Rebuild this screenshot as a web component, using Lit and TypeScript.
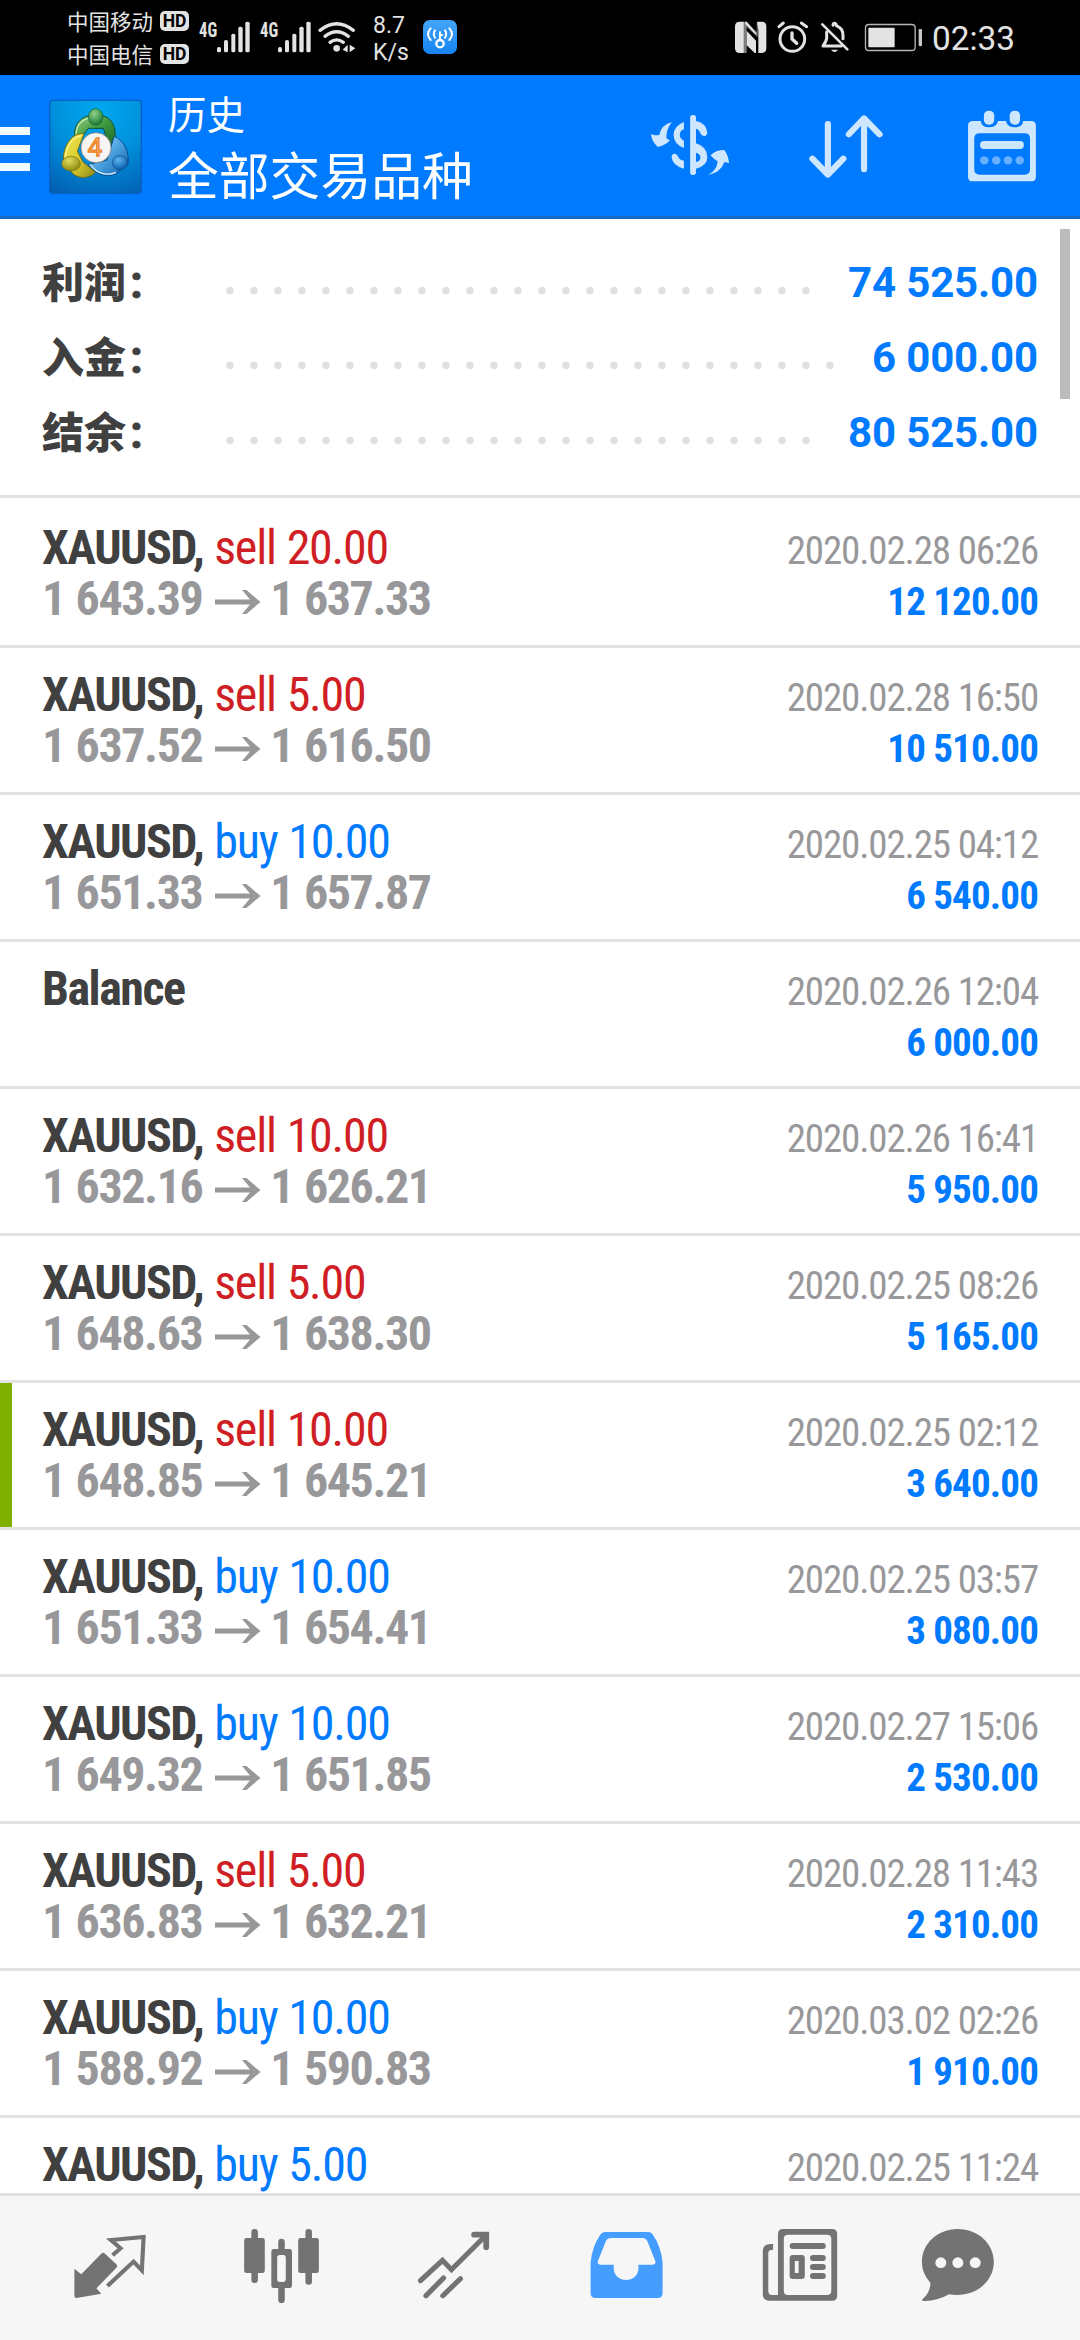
import { LitElement, html, css, svg, nothing } from "lit";
import { customElement, property } from "lit/decorators.js";

interface Deal {
  side?: "buy" | "sell";
  volume?: string;
  open?: string;
  close?: string;
  time: string;
  profit?: string;
  marked?: boolean;
}

const DEALS: Deal[] = [
  { side: "sell", volume: "20.00", open: "1 643.39", close: "1 637.33", time: "2020.02.28 06:26", profit: "12 120.00" },
  { side: "sell", volume: "5.00", open: "1 637.52", close: "1 616.50", time: "2020.02.28 16:50", profit: "10 510.00" },
  { side: "buy", volume: "10.00", open: "1 651.33", close: "1 657.87", time: "2020.02.25 04:12", profit: "6 540.00" },
  { time: "2020.02.26 12:04", profit: "6 000.00" },
  { side: "sell", volume: "10.00", open: "1 632.16", close: "1 626.21", time: "2020.02.26 16:41", profit: "5 950.00" },
  { side: "sell", volume: "5.00", open: "1 648.63", close: "1 638.30", time: "2020.02.25 08:26", profit: "5 165.00" },
  { side: "sell", volume: "10.00", open: "1 648.85", close: "1 645.21", time: "2020.02.25 02:12", profit: "3 640.00", marked: true },
  { side: "buy", volume: "10.00", open: "1 651.33", close: "1 654.41", time: "2020.02.25 03:57", profit: "3 080.00" },
  { side: "buy", volume: "10.00", open: "1 649.32", close: "1 651.85", time: "2020.02.27 15:06", profit: "2 530.00" },
  { side: "sell", volume: "5.00", open: "1 636.83", close: "1 632.21", time: "2020.02.28 11:43", profit: "2 310.00" },
  { side: "buy", volume: "10.00", open: "1 588.92", close: "1 590.83", time: "2020.03.02 02:26", profit: "1 910.00" },
  { side: "buy", volume: "5.00", time: "2020.02.25 11:24" },
];

const SUMMARY = [
  { label: "利润", value: "74 525.00" },
  { label: "入金", value: "6 000.00" },
  { label: "结余", value: "80 525.00" },
];

const signalBars = svg`
  <g fill="#e3e3e3">
    <rect x="107" y="141" width="12" height="16" rx="5"/>
    <rect x="128" y="120" width="12" height="37" rx="5"/>
    <rect x="150" y="101" width="12" height="56" rx="5"/>
    <rect x="171" y="80" width="13" height="77" rx="5"/>
    <rect x="192" y="65" width="13" height="92" rx="5"/>
  </g>`;

@customElement("status-bar")
export class StatusBar extends LitElement {
  static styles = css`
    :host { display: flex; height: 75px; background: #000; color: #e3e3e3; font-family: Roboto, "Noto Sans CJK SC", sans-serif; }
    svg { display: block; flex: none; }
    .carriers { display: flex; flex-direction: column; padding: 4px 0 0 67px; width: 122px; }
    .carrier { display: flex; align-items: center; justify-content: space-between; height: 33px; font-size: 21.5px; white-space: nowrap; font-family: "Noto Sans CJK SC", sans-serif; }
    .hd { width: 29px; height: 20px; border-radius: 5px; background: #e3e3e3; color: #000; font: 700 17.5px/20px Roboto, sans-serif; text-align: center; }
    .net { font: 700 20px/20px "Roboto Condensed", Roboto, sans-serif; width: 17px; padding-top: 19.5px; margin-left: 10px; }
    .net + svg + .net { margin-left: 9px; }
    .net span { display: inline-block; transform: scaleX(.83); transform-origin: left; }
    .speed { padding-top: 11.5px; margin-left: 13px; width: 50px; font-size: 23px; line-height: 27px; }
    .grow { flex: 1; }
    .clock { font-size: 34px; line-height: 40px; padding: 18px 0 0 2px; width: 148px; white-space: nowrap; }
    .clock span { display: inline-block; transform: scaleX(.98); transform-origin: left; }
  `;
  render() {
    return html`
      <div class="carriers">
        <div class="carrier"><span>中国移动</span><span class="hd">HD</span></div>
        <div class="carrier"><span>中国电信</span><span class="hd">HD</span></div>
      </div>
      <div class="net"><span>4G</span></div>
      <svg width="35" height="75" viewBox="104 0 105 225">${signalBars}</svg>
      <div class="net"><span>4G</span></div>
      <svg width="35" height="75" viewBox="104 0 105 225">${signalBars}</svg>
      <svg width="48" height="75" viewBox="396 0 144 225">
        <g fill="none" stroke="#e3e3e3" stroke-width="10" stroke-linecap="round">
          <path d="M420 91Q470 51 520 91"/>
          <path d="M435 109Q470 82 505 109"/>
          <path d="M450 127Q470 112 490 127"/>
        </g>
        <circle cx="470" cy="145" r="10" fill="#e3e3e3"/>
        <path d="M503 134V157L488 149ZM509 134L526 145L509 157Z" fill="#e3e3e3"/>
      </svg>
      <div class="speed">8.7<br>K/s</div>
      <svg width="35" height="75" viewBox="729 0 105 225">
        <defs><linearGradient id="g" x1="0" y1="0" x2="0" y2="1"><stop offset="0" stop-color="#46a6f8"/><stop offset="1" stop-color="#1683f2"/></linearGradient></defs>
        <rect x="729" y="60" width="102" height="102" rx="20" fill="url(#g)"/>
        <g fill="none" stroke="#fff" stroke-width="6" stroke-linecap="round">
          <circle cx="780" cy="131" r="11" stroke-width="7"/>
          <path d="M780 119V97M780 105H786"/>
          <path d="M765 91Q758 101 765 113M795 91Q802 101 795 113"/>
          <path d="M752 85Q736 101 752 120M808 85Q824 101 808 120"/>
        </g>
      </svg>
      <div class="grow"></div>
      <svg width="195" height="75" viewBox="43 -30 585 225">
        <path fill="#e3e3e3" d="M57 35Q43 35 43 49V115Q43 129 57 129H69V35Z"/>
        <path fill="#e3e3e3" d="M74 35H78L106 68V74L74 42Z"/>
        <path fill="#e3e3e3" d="M78 62L106 92V129H102L78 106Z"/>
        <path fill="#e3e3e3" d="M109 35H123Q137 35 137 49V115Q137 129 123 129H113V60Z"/>
        <path fill="#e3e3e3" d="M67 35H78L108 66V40H111V82L78 50V129H67Z" opacity=".55"/>
        <g fill="none" stroke="#e3e3e3" stroke-width="9" stroke-linecap="round">
          <circle cx="215" cy="87" r="37"/>
          <path d="M214 69V87L228 100" stroke-linejoin="round" stroke-width="10"/>
          <path d="M175 50L188 39M242 39L258 50"/>
        </g>
        <g fill="none" stroke="#e3e3e3" stroke-width="9" stroke-linecap="round" stroke-linejoin="round">
          <path d="M305 43L380 118" stroke-width="8"/>
          <path d="M318 66V86Q316 96 307 108H362"/>
          <path d="M337 46Q337 39 343 40Q347 41 347 47Q368 55 367 78V86"/>
        </g>
        <path d="M331 119H352Q342 133 331 119Z" fill="#e3e3e3"/>
        <rect x="434.500" y="43.500" width="149" height="78" rx="10" fill="none" stroke="#b5b5b5" stroke-width="4"/>
        <rect x="443" y="53" width="79" height="59" rx="3" fill="#e3e3e3"/>
        <rect x="594" y="57" width="10" height="52" rx="4" fill="#c8c8c8"/>
      </svg>
      <div class="clock"><span>02:33</span></div>
    `;
  }
}

@customElement("title-bar")
export class TitleBar extends LitElement {
  static styles = css`
    :host { display: flex; box-sizing: border-box; height: 144px; background: #007aff; border-bottom: 3px solid #1569c7; color: #fff; font-family: "Noto Sans CJK SC", sans-serif; }
    svg { display: block; flex: none; }
    .menu { width: 30px; padding-top: 52px; display: flex; flex-direction: column; gap: 10px; }
    .menu i { height: 8px; background: #f0fbff; }
    .logo { margin: 24px 0 0 18px; }
    .titles { flex: 1; margin-left: 25px; white-space: nowrap; }
    .small { font-size: 38.500px; line-height: 54px; padding-top: 10px; }
    .large { font-size: 50.800px; line-height: 66px; padding-top: 0.5px; }
    .four { font: 400 78px "Liberation Sans", sans-serif; }
  `;
  render() {
    return html`
      <div class="menu"><i></i><i></i><i></i></div>
      <svg class="logo" width="95" height="96" viewBox="24 12 285 288">
        <defs>
          <radialGradient id="bg" cx=".55" cy=".1" r="1"><stop offset="0" stop-color="#00a8f0"/><stop offset=".5" stop-color="#0090dc"/><stop offset="1" stop-color="#0260b4"/></radialGradient>
          <linearGradient id="gr" x1="0" y1="0" x2="1" y2="1"><stop offset="0" stop-color="#9bd283"/><stop offset=".5" stop-color="#3f9a3f"/><stop offset="1" stop-color="#1d6b2c"/></linearGradient>
          <linearGradient id="ye" x1="0" y1="0" x2="1" y2="1"><stop offset="0" stop-color="#f7ea50"/><stop offset=".6" stop-color="#d2c32b"/><stop offset="1" stop-color="#8f8a18"/></linearGradient>
          <linearGradient id="bl" x1="0" y1="0" x2="1" y2="1"><stop offset="0" stop-color="#b5e0fa"/><stop offset=".5" stop-color="#4aa3e0"/><stop offset="1" stop-color="#0f5ea8"/></linearGradient>
          <radialGradient id="hg" cx=".4" cy=".3" r=".7"><stop offset="0" stop-color="#8fd28a"/><stop offset="1" stop-color="#197a35"/></radialGradient>
          <radialGradient id="hy" cx=".4" cy=".3" r=".7"><stop offset="0" stop-color="#e3dc5c"/><stop offset="1" stop-color="#8c8a12"/></radialGradient>
          <radialGradient id="hb" cx=".4" cy=".3" r=".7"><stop offset="0" stop-color="#5cb4ee"/><stop offset="1" stop-color="#0d5eaf"/></radialGradient>
        </defs>
        <rect x="29" y="16" width="275" height="279" rx="9" fill="url(#bg)" stroke="#0a5fc0" stroke-width="4"/>
        <g stroke-linejoin="round">
          <path d="M105 130C98 92 122 65 150 62H184C216 66 232 100 223 136L207 148L190 100H145L125 125Z" fill="url(#gr)" stroke="#14532a" stroke-width="3"/>
          <path d="M109 124C106 92 125 73 148 70" fill="none" stroke="#c5ecb2" stroke-width="4"/>
          <path d="M132 116C98 112 72 148 70 190L92 228C112 256 150 250 166 232L128 200L112 168Z" fill="url(#ye)" stroke="#77700f" stroke-width="3"/>
          <path d="M76 186C80 150 98 126 126 122" fill="none" stroke="#fbf59c" stroke-width="4"/>
          <path d="M222 124C252 136 268 168 264 206L240 226C214 254 172 244 146 208L200 196L212 160Z" fill="url(#bl)" stroke="#0b4a88" stroke-width="3"/>
          <path d="M150 208C172 240 206 242 228 232" fill="none" stroke="#d5efff" stroke-width="4"/>
        </g>
        <ellipse cx="167" cy="66" rx="22" ry="25" fill="url(#hg)" stroke="#14602c" stroke-width="2"/>
        <ellipse cx="93" cy="206" rx="28" ry="22" fill="url(#hy)" stroke="#77700f" stroke-width="2"/>
        <ellipse cx="240" cy="203" rx="23" ry="21" fill="url(#hb)" stroke="#0b4a88" stroke-width="2"/>
        <circle cx="168" cy="158" r="45" fill="#f6f4f4" stroke="#8a7a60" stroke-width="2"/>
        <text x="165" y="184" class="four" text-anchor="middle" fill="#fbb871" stroke="#ee8428" stroke-width="4">4</text>
      </svg>
      <div class="titles">
        <div class="small">历史</div>
        <div class="large">全部交易品种</div>
      </div>
      <svg width="156" height="141" viewBox="209.100 225 453 423" preserveAspectRatio="none">
        <g fill="#cfe6ff">
          <rect x="436" y="345" width="17" height="180" rx="8"/>
          <path d="M383 366Q350 376 347 404Q334 408 322 402Q325 425 342 441Q364 437 377 421L367 415Q366 388 383 366Z"/>
          <path d="M488 525Q514 512 516 484Q504 477 495 466Q510 450 535 450Q547 466 549 489L536 486Q524 518 488 525Z"/>
          <path d="M418 366V388Q406 392 406 405Q406 416 418 422V444Q388 432 388 405Q388 378 418 366Z"/>
          <path fill-rule="evenodd" d="M453 430Q486 440 486 472Q486 498 453 506ZM453 458V486Q466 484 466 472Q466 462 453 458Z"/>
          <path d="M418 482V506Q384 496 382 470Q384 460 392 461Q399 462 401 470Q406 480 418 482Z"/>
          <path d="M453 363Q484 370 486 398Q484 408 476 408Q468 408 466 400Q462 388 453 386Z"/>
        </g>
      </svg>
      <svg width="156" height="141" viewBox="662.100 225 453 423" preserveAspectRatio="none">
        <g fill="none" stroke="#cfe6ff" stroke-width="18" stroke-linecap="round" stroke-linejoin="round">
          <path d="M836 372V523M791 476L836 524L881 476"/>
          <path d="M941 508V356M897 403L941 355L986 403"/>
        </g>
      </svg>
      <svg width="156" height="141" viewBox="1115.100 225 453 423" preserveAspectRatio="none">
        <path fill="#cfe6ff" fill-rule="evenodd" d="M1257 363H1280Q1282 382 1304 382Q1326 382 1330 363H1353Q1357 382 1379 382Q1401 382 1403 363H1426Q1440 363 1440 377V530Q1440 544 1426 544H1257Q1243 544 1243 530V377Q1243 363 1257 363ZM1277 400Q1261 400 1261 416V508Q1261 524 1277 524H1407Q1423 524 1423 508V416Q1423 400 1407 400Z"/>
        <g fill="#cfe6ff">
          <rect x="1287" y="330" width="34" height="46" rx="16" fill="#007aff"/>
          <rect x="1362" y="330" width="34" height="46" rx="16" fill="#007aff"/>
          <rect x="1289" y="332" width="30" height="42" rx="14"/>
          <rect x="1364" y="332" width="30" height="42" rx="14"/>
          <rect x="1278" y="423" width="127" height="24" rx="11"/>
          <g opacity=".5"><circle cx="1290" cy="481" r="12.500"/><circle cx="1325" cy="481" r="12.500"/><circle cx="1359" cy="481" r="12.500"/><circle cx="1393" cy="481" r="12.500"/></g>
        </g>
      </svg>
    `;
  }
}

@customElement("deal-row")
export class DealRow extends LitElement {
  @property({ attribute: false }) deal!: Deal;
  static styles = css`
    :host { display: flex; justify-content: space-between; box-sizing: border-box; height: 147px; border-bottom: 3px solid #e3e3e3; padding-right: 42px; font-family: "Roboto Condensed", Roboto, sans-serif; white-space: nowrap; }
    .mark { width: 12px; background: transparent; }
    .mark.on { background: #7fb000; }
    .left { flex: 1; padding: 21px 0 0 30px; font-size: 48px; line-height: 51px; letter-spacing: -1.2px; word-spacing: 1px; }
    .right { padding-top: 25px; font-size: 39px; line-height: 51px; text-align: right; }
    .name { font-weight: 700; color: #404040; letter-spacing: -1.5px; }
    .buy { color: #007aff; }
    .sell { color: #cf1f25; }
    .prices { font-weight: 700; color: #98989a; letter-spacing: -1.4px; }
    .arrow { width: 46px; height: 26px; margin: 0 9px 0 13px; }
    .time { color: #98989a; letter-spacing: -1.15px; }
    .profit { font-weight: 700; color: #007aff; letter-spacing: -0.85px; }
  `;
  render() {
    const d = this.deal;
    return html`
      <div class="mark ${d.marked ? "on" : ""}"></div>
      <div class="left">
        ${d.side
          ? html`<div><span class="name">XAUUSD,</span> <span class=${d.side}>${d.side} ${d.volume}</span></div>`
          : html`<div class="name">Balance</div>`}
        ${d.open
          ? html`<div class="prices">${d.open}<svg class="arrow" viewBox="0 0 46 26"><path d="M0 10.500H35L27 1H31.500L45.500 13L31.500 25H27L35 15.500H0Z" fill="#98989a"/></svg>${d.close}</div>`
          : nothing}
      </div>
      <div class="right">
        <div class="time">${d.time}</div>
        ${d.profit ? html`<div class="profit">${d.profit}</div>` : nothing}
      </div>
    `;
  }
}

@customElement("tab-bar")
export class TabBar extends LitElement {
  static styles = css`
    :host { display: flex; box-sizing: border-box; height: 147px; padding-left: 21px; border-top: 3px solid #e0e0e0; background: #f6f6f6; color: #737373; }
    svg { display: block; flex: none; width: 173px; height: 144px; }
  `;
  render() {
    const icon = (x: number, body: unknown) =>
      html`<svg viewBox="${x} 348 502.400 432" preserveAspectRatio="none">${body}</svg>`;
    return html`
      ${icon(61, svg`
        <path fill="currentColor" d="M216 566L236 583L294 521Q299 516 305 521L338 553Q342 558 338 563L280 625L294 641L222 654Q216 654 216 647Z"/>
        <path fill="none" stroke="currentColor" stroke-width="12" d="M327 526L350 505L322 480L417 471L412 571L388 545L312 618"/>`)}
      ${icon(563.4, svg`
        <g fill="currentColor">
          <rect x="709" y="474" width="60" height="105" rx="7"/><rect x="730" y="447" width="19" height="162" rx="9"/>
          <rect x="866" y="474" width="60" height="105" rx="7"/><rect x="887" y="447" width="19" height="167" rx="9"/>
          <path fill-rule="evenodd" d="M808 486Q808 476 817.500 476Q827 476 827 486V507H841Q848 507 848 514V617Q848 624 841 624H827V659Q827 669 817.500 669Q808 669 808 659V624H795Q788 624 788 617V514Q788 507 795 507H808ZM812 525Q805 525 805 533V598Q805 606 812 606H824Q830 606 830 598V533Q830 525 824 525Z"/>
        </g>`)}
      ${icon(1065.8, svg`
        <g fill="none" stroke="currentColor" stroke-width="15" stroke-linecap="round">
          <path d="M1221 602L1285 541L1311 569L1410 467" stroke-linejoin="miter"/>
          <path d="M1377 464H1412V502" stroke-width="17" stroke-linejoin="miter"/>
          <path d="M1237 647L1288 594M1286 647L1337 596"/>
        </g>`)}
      ${icon(0, svg`
        <path fill="#459dff" fill-rule="evenodd" d="M190 456H314Q322 456 327 463Q352 500 356 548V640Q356 654 342 654H161Q147 654 147 640V548Q151 500 176 463Q181 456 190 456ZM206 474Q196 474 191 484L168 544Q166 554 176 554H214V564C214 612 286 612 286 564V554H326Q337 554 335 544L312 484Q307 474 297 474Z"/>`)}
      ${icon(502.4, svg`
        <path fill="currentColor" fill-rule="evenodd" d="M706 447H848Q863 447 863 462V647Q863 662 848 662H666Q647 662 647 643V514Q647 492 670 492H677V509Q663 509 663 518V634Q663 645 674 645H691V462Q691 447 706 447ZM720 464Q708 464 708 476V632Q708 645 720 645H833Q846 645 846 632V476Q846 464 833 464Z"/>
        <g fill="currentColor">
          <rect x="725" y="489" width="105" height="18" rx="9"/>
          <path fill-rule="evenodd" d="M734 525H760Q769 525 769 534V588Q769 597 760 597H734Q725 597 725 588V534Q725 525 734 525ZM740 543V579H751V543Z"/>
          <rect x="784" y="525" width="46" height="18" rx="9"/><rect x="784" y="552" width="46" height="18" rx="9"/><rect x="784" y="579" width="46" height="18" rx="9"/>
        </g>`)}
      ${icon(1004.8, svg`
        <path fill="currentColor" d="M1213 447C1273 447 1318 492 1318 546C1318 602 1266 656 1188 643Q1152 664 1114 663Q1106 662 1112 656Q1132 640 1134 609Q1109 580 1109 546C1109 492 1154 447 1213 447Z"/>
        <g fill="#f6f6f6"><circle cx="1164" cy="548" r="16"/><circle cx="1213.500" cy="548" r="16"/><circle cx="1264" cy="548" r="16"/></g>`)}
    `;
  }
}

@customElement("app-root")
export class AppRoot extends LitElement {
  static styles = css`
    :host { display: flex; flex-direction: column; width: 1080px; height: 2340px; background: #fff; overflow: hidden; font-family: Roboto, "Noto Sans CJK SC", sans-serif; }
    status-bar, title-bar, tab-bar { flex: none; }
    .page { flex: 1; min-height: 0; overflow: hidden; position: relative; }
    .thumb { position: absolute; right: 10px; top: 10px; width: 10px; height: 170px; background: #bbb; }
    .summary { padding: 26px 42px 25px; border-bottom: 3px solid #e3e3e3; }
    .line { display: flex; height: 75px; line-height: 75px; font-weight: 700; font-size: 42px; }
    .label { width: 176px; color: #404040; display: flex; }
    .label b { font-family: "Noto Sans CJK SC", sans-serif; line-height: 69px; }
    .label i { font-style: normal; font-size: 46px; margin-left: 4px; -webkit-text-stroke: 0.8px #404040; }
    .dots { flex: 1; margin-right: 30px; background: radial-gradient(circle 4px at 12px 45.500px, #e0e0e0 3.300px, transparent 4.200px) 0 0 / 24px 75px repeat-x; }
    .value { color: #007aff; letter-spacing: -0.15px; }
    .list { padding-top: 3px; }
  `;
  render() {
    return html`
      <status-bar></status-bar>
      <title-bar></title-bar>
      <div class="page">
        <div class="summary">
          ${SUMMARY.map((s) => html`
            <div class="line">
              <div class="label"><b>${s.label}</b><i>:</i></div>
              <div class="dots"></div>
              <div class="value">${s.value}</div>
            </div>`)}
        </div>
        <div class="list">${DEALS.map((d) => html`<deal-row .deal=${d}></deal-row>`)}</div>
        <div class="thumb"></div>
      </div>
      <tab-bar></tab-bar>
    `;
  }
}
